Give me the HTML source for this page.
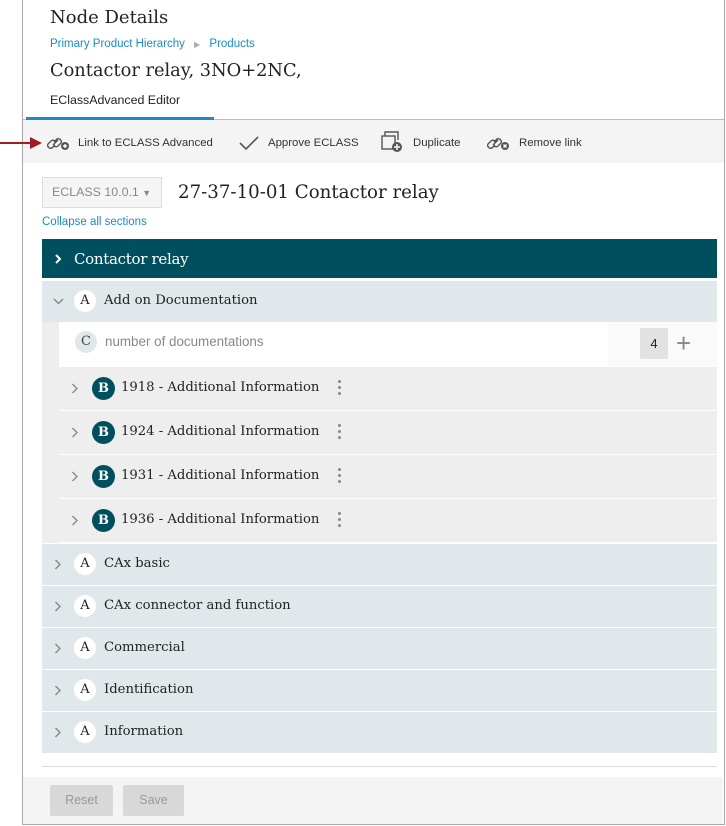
<!DOCTYPE html>
<html><head><style>
body{margin:0;width:726px;height:826px;background:#fff;font-family:"Liberation Sans",sans-serif;position:relative;overflow:hidden}
.a{position:absolute}
.serif{font-family:"DejaVu Serif","Liberation Serif",serif}
.frame{left:22px;top:0;width:701px;height:824px;border:1px solid #a8a8a8;border-top:none}
.row{position:absolute;left:42px;width:675px;height:41px;background:#e1e8eb}
.chev{position:absolute}
.circ{position:absolute;width:22px;height:22px;border-radius:50%;background:#fff;text-align:center;line-height:22px;font-size:13px;color:#222}
.row .lbl{position:absolute;left:62px;top:12px;font-size:13.2px;color:#222}
.b{position:absolute;left:59px;width:658px;height:43px;background:#eeeeee}
.b .circ{background:#004f5e;color:#fff;left:33px;top:10px;width:23px;height:23px;line-height:23px;font-weight:bold}
.b .lbl{position:absolute;left:62px;top:13px;font-size:13.2px;color:#222}
.dots{position:absolute;left:279px;top:13px;width:3px}
.dots i{display:block;width:3px;height:3px;border-radius:50%;background:#888;margin-bottom:3px}
.tb{font-size:11.4px;color:#333;top:137px}
</style></head><body>
<div class="a frame"></div>
<div class="a serif" style="left:50px;top:7px;font-size:18px;color:#222">Node Details</div>
<div class="a" style="left:50px;top:38px;font-size:11.5px;color:#1a8bc4">Primary Product Hierarchy <span style="color:#aaa;font-size:8px;margin:0 6px">▶</span> Products</div>
<div class="a serif" style="left:50px;top:60px;font-size:17.8px;color:#222">Contactor relay, 3NO+2NC,</div>
<div class="a" style="left:50px;top:93px;font-size:12.4px;color:#222">EClassAdvanced Editor</div>
<div class="a" style="left:23px;top:119px;width:701px;height:1px;background:#bbb"></div>
<div class="a" style="left:26px;top:117px;width:188px;height:3px;background:#1a8bc4"></div>
<div class="a" style="left:23px;top:120px;width:701px;height:43px;background:#f4f4f4"></div>
<div class="a" style="left:0;top:142px;width:32px;height:2px;background:#a01c24"></div>
<svg class="a" style="left:30px;top:137px" width="12" height="12"><path d="M0 0 L12 6 L0 12Z" fill="#a01c24"/></svg>
<svg class="a" style="left:47px;top:134px" width="24" height="18" fill="none" stroke="#555" stroke-width="1.4"><path d="M8 11 L5 14 a3 3 0 0 1 -4-4 l3-3 a3 3 0 0 1 4 0 M7 8 L10 5 a3 3 0 0 1 4 4 l-3 3 a3 3 0 0 1 -4 0 M6 11 L11 6"/><circle cx="18" cy="12" r="4" fill="#555" stroke="none"/><path d="M16 12h4M18 10v4" stroke="#fff"/></svg>
<div class="a tb" style="left:78px">Link to ECLASS Advanced</div>
<svg class="a" style="left:239px;top:135px" width="20" height="16" fill="none" stroke="#555" stroke-width="1.6"><path d="M1 8 L7 14 L19 2"/></svg>
<div class="a tb" style="left:268px">Approve ECLASS</div>
<svg class="a" style="left:381px;top:131px" width="24" height="22" fill="none" stroke="#555" stroke-width="1.4"><rect x="1" y="5" width="13" height="13"/><path d="M4 5V1h13v8"/><circle cx="16" cy="16" r="5" fill="#555" stroke="none"/><path d="M13 16h6M16 13v6" stroke="#fff"/></svg>
<div class="a tb" style="left:413px">Duplicate</div>
<svg class="a" style="left:487px;top:134px" width="24" height="18" fill="none" stroke="#555" stroke-width="1.4"><path d="M8 11 L5 14 a3 3 0 0 1 -4-4 l3-3 a3 3 0 0 1 4 0 M7 8 L10 5 a3 3 0 0 1 4 4 l-3 3 a3 3 0 0 1 -4 0 M6 11 L11 6"/><circle cx="18" cy="12" r="4" fill="#555" stroke="none"/><path d="M16.5 10.5l3 3M19.5 10.5l-3 3" stroke="#fff"/></svg>
<div class="a tb" style="left:519px">Remove link</div>
<div class="a" style="left:42px;top:177px;border:1px solid #ddd;background:#f5f5f5;color:#888;font-size:12.4px;line-height:29px;padding-left:9px;box-sizing:border-box;width:120px;height:31px">ECLASS 10.0.1 <span style="font-size:9px">▼</span></div>
<div class="a serif" style="left:178px;top:182px;font-size:18.2px;color:#222">27-37-10-01 Contactor relay</div>
<div class="a" style="left:42px;top:216px;font-size:11.5px;color:#1a8bc4">Collapse all sections</div>
<div class="a" style="left:42px;top:239px;width:675px;height:39px;background:#004f5e"></div>
<svg class="a chev" style="left:54px;top:254px" width="8" height="10" fill="none" stroke="#fff" stroke-width="2"><path d="M2 1l4 4-4 4"/></svg>
<div class="a serif" style="left:74px;top:250px;color:#fff;font-size:15px;letter-spacing:-0.3px">Contactor relay</div>
<div class="row" style="top:281px"><svg class="chev" style="left:11px;top:17px" width="11" height="8" fill="none" stroke="#888" stroke-width="1.4"><path d="M1 1l4.5 4.5L10 1"/></svg><div class="circ serif" style="left:32px;top:9px">A</div><span class="lbl serif">Add on Documentation</span></div>
<div class="a" style="left:42px;top:322px;width:17px;height:221px;background:#eeeeee"></div>
<div class="a" style="left:59px;top:322px;width:658px;height:44px;background:#fff"></div>
<div class="a" style="left:608px;top:322px;width:109px;height:44px;background:#fafafa"></div>
<div class="circ a serif" style="left:75px;top:331px;background:#e1e8eb;color:#444">C</div>
<div class="a" style="left:105px;top:334px;font-size:13.4px;color:#888">number of documentations</div>
<div class="a" style="left:640px;top:328px;width:28px;height:31px;background:#e2e2e2;border-radius:2px;text-align:center;line-height:31px;font-size:13px;color:#222">4</div>
<div class="a" style="left:676px;top:327px;font-size:26px;color:#888;font-weight:300;line-height:32px">+</div>
<div class="b" style="top:367px"><svg class="chev" style="left:12px;top:16px" width="8" height="11" fill="none" stroke="#888" stroke-width="1.4"><path d="M1.5 1l4.5 4.5-4.5 4.5"/></svg><div class="circ serif">B</div><span class="lbl serif">1918 - Additional Information</span><span class="dots"><i></i><i></i><i></i></span></div>
<div class="b" style="top:411px"><svg class="chev" style="left:12px;top:16px" width="8" height="11" fill="none" stroke="#888" stroke-width="1.4"><path d="M1.5 1l4.5 4.5-4.5 4.5"/></svg><div class="circ serif">B</div><span class="lbl serif">1924 - Additional Information</span><span class="dots"><i></i><i></i><i></i></span></div>
<div class="b" style="top:455px"><svg class="chev" style="left:12px;top:16px" width="8" height="11" fill="none" stroke="#888" stroke-width="1.4"><path d="M1.5 1l4.5 4.5-4.5 4.5"/></svg><div class="circ serif">B</div><span class="lbl serif">1931 - Additional Information</span><span class="dots"><i></i><i></i><i></i></span></div>
<div class="b" style="top:499px"><svg class="chev" style="left:12px;top:16px" width="8" height="11" fill="none" stroke="#888" stroke-width="1.4"><path d="M1.5 1l4.5 4.5-4.5 4.5"/></svg><div class="circ serif">B</div><span class="lbl serif">1936 - Additional Information</span><span class="dots"><i></i><i></i><i></i></span></div>
<div class="row" style="top:544px"><svg class="chev" style="left:12px;top:15px" width="8" height="11" fill="none" stroke="#888" stroke-width="1.4"><path d="M1.5 1l4.5 4.5-4.5 4.5"/></svg><div class="circ serif" style="left:32px;top:9px">A</div><span class="lbl serif">CAx basic</span></div>
<div class="row" style="top:586px"><svg class="chev" style="left:12px;top:15px" width="8" height="11" fill="none" stroke="#888" stroke-width="1.4"><path d="M1.5 1l4.5 4.5-4.5 4.5"/></svg><div class="circ serif" style="left:32px;top:9px">A</div><span class="lbl serif">CAx connector and function</span></div>
<div class="row" style="top:628px"><svg class="chev" style="left:12px;top:15px" width="8" height="11" fill="none" stroke="#888" stroke-width="1.4"><path d="M1.5 1l4.5 4.5-4.5 4.5"/></svg><div class="circ serif" style="left:32px;top:9px">A</div><span class="lbl serif">Commercial</span></div>
<div class="row" style="top:670px"><svg class="chev" style="left:12px;top:15px" width="8" height="11" fill="none" stroke="#888" stroke-width="1.4"><path d="M1.5 1l4.5 4.5-4.5 4.5"/></svg><div class="circ serif" style="left:32px;top:9px">A</div><span class="lbl serif">Identification</span></div>
<div class="row" style="top:712px"><svg class="chev" style="left:12px;top:15px" width="8" height="11" fill="none" stroke="#888" stroke-width="1.4"><path d="M1.5 1l4.5 4.5-4.5 4.5"/></svg><div class="circ serif" style="left:32px;top:9px">A</div><span class="lbl serif">Information</span></div>
<div class="a" style="left:42px;top:766px;width:675px;height:1px;background:#ddd"></div>
<div class="a" style="left:23px;top:777px;width:700px;height:47px;background:#f4f4f4"></div>
<div class="a" style="left:50px;top:785px;width:63px;height:31px;background:#d8d8d8;border-radius:2px;color:#999;font-size:12.5px;text-align:center;line-height:31px">Reset</div>
<div class="a" style="left:123px;top:785px;width:61px;height:31px;background:#d8d8d8;border-radius:2px;color:#999;font-size:12.5px;text-align:center;line-height:31px">Save</div>
</body></html>
